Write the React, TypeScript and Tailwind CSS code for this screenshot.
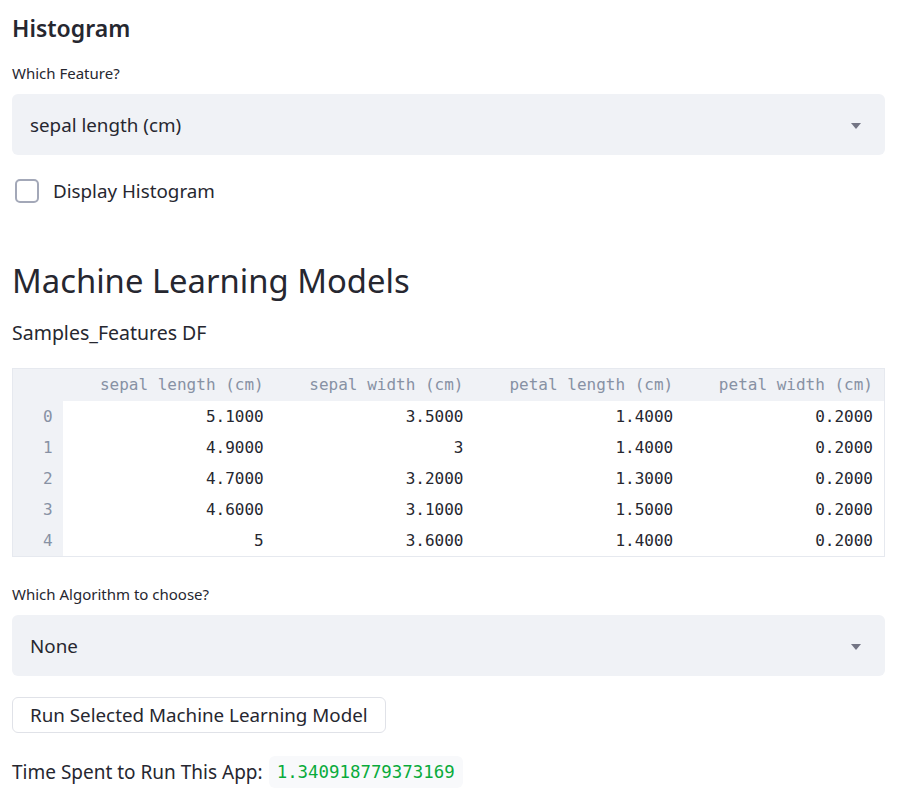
import React from 'react';

const rows = [
  ['5.1000', '3.5000', '1.4000', '0.2000'],
  ['4.9000', '3', '1.4000', '0.2000'],
  ['4.7000', '3.2000', '1.3000', '0.2000'],
  ['4.6000', '3.1000', '1.5000', '0.2000'],
  ['5', '3.6000', '1.4000', '0.2000'],
];
const cols = ['sepal length (cm)', 'sepal width (cm)', 'petal length (cm)', 'petal width (cm)'];
const colW = ['w-[212px]', 'w-[200px]', 'w-[210px]', 'w-[200px]'];

const mono = "font-['DejaVu_Sans_Mono',monospace]";

function Caret() {
  return (
    <svg width="10" height="6" viewBox="0 0 10 6" className="shrink-0">
      <path d="M0 0h10L5 6z" fill="#737584" />
    </svg>
  );
}

function Select({ value }: { value: string }) {
  return (
    <div className="flex h-[61px] items-center justify-between rounded-md bg-[#f0f2f6] pl-[18px] pr-[24px] pt-[2px] text-[18.8px] text-[#262730]">
      <span>{value}</span>
      <Caret />
    </div>
  );
}

export default function App() {
  return (
    <div className="bg-white px-3 text-[#262730] font-['Noto_Sans',sans-serif]">
      <div className="w-[873px]">
        <h2 className="pt-[13px] text-[23px] font-semibold leading-[30px]">Histogram</h2>
        <div className="mt-[21px] text-[15px] leading-[18px]">Which Feature?</div>
        <div className="mt-[12px]">
          <Select value="sepal length (cm)" />
        </div>
        <div className="mt-[24px] flex items-center">
          <div className="ml-[3px] h-[24px] w-[24px] rounded-[5px] border-2 border-[#a3a8b8] bg-white" />
          <span className="ml-[14px] text-[18.8px] leading-[24px]">Display Histogram</span>
        </div>
        <h1 className="mt-[56px] text-[32.8px] font-normal leading-[44px]">Machine Learning Models</h1>
        <div className="mt-[18px] text-[19.5px] leading-[24px]">Samples_Features DF</div>

        <div className={`mt-[23px] border border-[#e6e9ef] ${mono} text-[16px]`}>
          <div className="flex h-[32px] items-center bg-[#f0f2f6] text-[#8791a4]">
            <div className="w-[50px]" />
            {cols.map((c, i) => (
              <div key={c} className={`${colW[i]} pr-[11px] text-right`}>{c}</div>
            ))}
          </div>
          {rows.map((r, ri) => (
            <div key={ri} className="flex h-[31px] items-center">
              <div className="flex h-full w-[50px] items-center bg-[#f0f2f6] pl-[30px] text-[#8791a4]">{ri}</div>
              {r.map((v, i) => (
                <div key={i} className={`${colW[i]} pr-[11px] text-right text-[#262730]`}>{v}</div>
              ))}
            </div>
          ))}
        </div>

        <div className="mt-[28px] text-[15px] leading-[18px]">Which Algorithm to choose?</div>
        <div className="mt-[12px]">
          <Select value="None" />
        </div>
        <div className="mt-[21px]">
          <button className="h-[36px] rounded-md border border-[#e0e2e8] bg-white px-[17px] text-[18.8px] text-[#262730]">
            Run Selected Machine Learning Model
          </button>
        </div>
        <div className="mt-[23px] flex items-center pb-[8px] text-[19px]">
          <span>Time Spent to Run This App:</span>
          <span className={`ml-[6px] rounded-md bg-[#f8f9fb] px-[8px] py-[3px] ${mono} text-[17.4px] text-[#09ab3b]`}>
            1.340918779373169
          </span>
        </div>
      </div>
    </div>
  );
}
